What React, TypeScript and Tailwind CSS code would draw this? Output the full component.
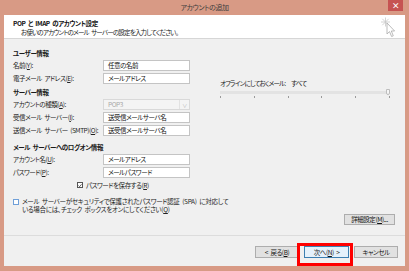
import type { ReactNode } from 'react'

const FONT = "font-['Noto_Sans_CJK_JP',sans-serif] [font-feature-settings:'palt'] [word-spacing:1.5px]"

function Key({ k }: { k: string }) {
  return <span className="underline underline-offset-1">{k}</span>
}

function Field({ label, value, muted }: { label: ReactNode; value: string; muted?: boolean }) {
  return (
    <div className="mt-[2px] flex h-[11px] items-center">
      <div className="w-[90px] shrink-0 whitespace-nowrap text-[#222]">{label}</div>
      <div
        className={
          muted
            ? 'flex h-[11px] w-[87px] items-center justify-between border border-[#d9d9d9] bg-[#f4f4f4] pl-[4px] text-[#a8a8a8]'
            : 'flex h-[11px] w-[87px] items-center border border-[#c4c4c4] bg-white pl-[4px] text-[#111]'
        }
      >
        {value}
        {muted && (
          <span className="flex h-full w-[10px] items-center justify-center border-l border-[#e2e2e2] text-[5px] text-[#b5b5b5]">
            ∨
          </span>
        )}
      </div>
    </div>
  )
}

function SectionTitle({ children, className }: { children: ReactNode; className: string }) {
  return <div className={`flex h-[10px] items-center font-bold text-[#1a1a1a] ${className}`}>{children}</div>
}

function Button({ children, primary }: { children: ReactNode; primary?: boolean }) {
  return (
    <div
      className={
        primary
          ? 'flex h-[12px] w-[45px] items-center justify-center border border-[#3c7fb1] bg-[#e5f1fb] text-[#111]'
          : 'flex h-[12px] w-[44px] items-center justify-center border border-[#adadad] bg-[#e1e1e1] text-[#111]'
      }
    >
      {children}
    </div>
  )
}

function WizardCursor() {
  return (
    <svg width="16" height="21" viewBox="0 0 16 21" className="absolute right-[8px] top-[2px]">
      <g stroke="#c8c8c8" strokeWidth="0.8">
        <line x1="4.5" y1="0.5" x2="4.5" y2="9.5" />
        <line x1="0" y1="5" x2="9" y2="5" />
        <line x1="1.3" y1="1.8" x2="7.7" y2="8.2" />
        <line x1="7.7" y1="1.8" x2="1.3" y2="8.2" />
      </g>
      <path
        d="M6 6 L6 17 L8.5 14.6 L10.6 19.5 L12.3 18.8 L10.3 14 L13.6 14 Z"
        fill="#fff"
        stroke="#a9a9a9"
        strokeWidth="0.8"
        strokeLinejoin="round"
      />
    </svg>
  )
}

export default function App() {
  return (
    <div
      className={`relative flex h-[271px] w-[409px] flex-col bg-[#d89a85] text-[6.5px] leading-none tracking-[-0.45px] ${FONT}`}
    >
      <div className="relative flex h-[15px] shrink-0 items-center justify-center text-[7px] text-[#3d3d3d]">
        アカウントの追加
        <div className="absolute right-[6px] top-0 flex h-[11px] w-[15px] items-center justify-center bg-[#c65352] text-[8px] font-bold text-white">
          ×
        </div>
      </div>

      <div className="mx-[4px] flex flex-1 flex-col bg-[#f0f0f0]">
        <div className="relative h-[24px] shrink-0 border-b border-[#d6d6d6] bg-white">
          <div className="pl-[9px] pt-[5px] font-bold text-[#111]">POP と IMAP のアカウント設定</div>
          <div className="pl-[17px] pt-[2px] tracking-[-0.8px] text-[#222]">
            お使いのアカウントのメール サーバーの設定を入力してください。
          </div>
          <WizardCursor />
        </div>

        <div className="flex">
          <div className="w-[186px] shrink-0 pl-[9px]">
            <SectionTitle className="mt-[9px]">ユーザー情報</SectionTitle>
            <div className="mt-[2px]" />
            <Field label={<>名前(<Key k="Y" />):</>} value="任意の名前" />
            <Field label={<>電子メール アドレス(<Key k="E" />):</>} value="メールアドレス" />

            <SectionTitle className="mt-[3px]">サーバー情報</SectionTitle>
            <div className="mt-[1px]" />
            <Field label={<>アカウントの種類(<Key k="A" />):</>} value="POP3" muted />
            <Field label={<>受信メール サーバー(<Key k="I" />):</>} value="送受信メールサーバ名" />
            <Field label={<>送信メール サーバー (SMTP)(<Key k="O" />):</>} value="送受信メールサーバ名" />

            <SectionTitle className="mt-[6px]">メール サーバーへのログオン情報</SectionTitle>
            <Field label={<>アカウント名(<Key k="U" />):</>} value="メールアドレス" />
            <Field label={<>パスワード(<Key k="P" />):</>} value="メールパスワード" />

            <div className="mt-[2px] flex h-[10px] items-center pl-[64px] text-[#222]">
              <span className="mr-[3px] flex h-[6px] w-[6px] items-center justify-center border border-[#555] bg-white">
                <svg width="5" height="5" viewBox="0 0 5 5">
                  <path d="M0.6 2.6 L2 4 L4.4 1" fill="none" stroke="#222" strokeWidth="0.9" />
                </svg>
              </span>
              パスワードを保存する(<Key k="R" />)
            </div>
          </div>

          <div className="flex-1 pl-[30px] pr-[12px] pt-[41px]">
            <div className="tracking-[-0.8px] text-[#222]">オフラインにしておくメール:　すべて</div>
            <div className="relative mt-[4px] h-[3px] w-[169px] bg-[#e3e3e3]">
              <div className="absolute right-[-1px] top-[-2px] h-[6px] w-[4px] rounded-b-[2px] border border-[#bdbdbd] bg-[#f6f6f6]" />
            </div>
            <div className="mt-[2px] flex w-[170px] justify-between">
              {[0, 1, 2, 3, 4, 5].map((i) => (
                <div key={i} className="h-[2px] w-[1px] bg-[#9a9a9a]" />
              ))}
            </div>
          </div>
        </div>

        <div className="mt-[8px] flex pl-[9px] text-[#222]">
          <span className="mt-[1px] h-[6px] w-[6px] shrink-0 border border-[#6f9fd8] bg-white" />
          <div className="flex flex-col whitespace-nowrap pl-[3px] tracking-[-0.3px]">
            <div className="h-[8px]">メール サーバーがセキュリティで保護されたパスワード認証 (SPA) に対応して</div>
            <div className="h-[8px]">
              いる場合には、チェック ボックスをオンにしてください(<Key k="Q" />)
            </div>
          </div>
        </div>

        <div className="flex justify-end pr-[10px]">
          <div className="flex h-[11px] w-[51px] items-center justify-center border border-[#adadad] bg-[#e1e1e1] text-[#111]">
            詳細設定(<Key k="M" />)...
          </div>
        </div>

        <div className="mt-[10px] border-t border-[#dcdcdc]" />

        <div className="relative mt-[10px] flex justify-end gap-[5px] pr-[7px]">
          <Button>&lt; 戻る(<Key k="B" />)</Button>
          <Button primary>
            次へ(<Key k="N" />) &gt;
          </Button>
          <Button>キャンセル</Button>
        </div>
      </div>
      <div className="h-[5px] shrink-0" />

      <div className="absolute left-[297px] top-[243px] h-[23px] w-[56px] border-[3px] border-[#ff0000]" />
    </div>
  )
}
